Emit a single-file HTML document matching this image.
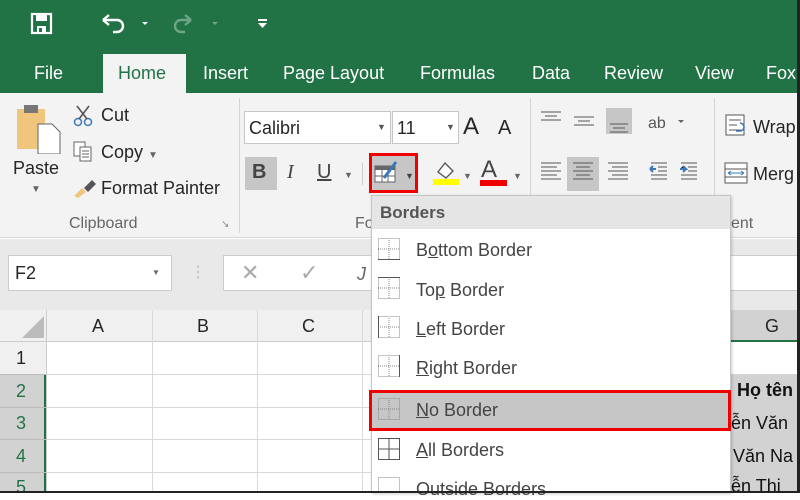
<!DOCTYPE html>
<html><head><style>
*{margin:0;padding:0;box-sizing:border-box}
body{width:800px;height:493px;overflow:hidden;background:#fff;font-family:"Liberation Sans",sans-serif;position:relative;color:#262626}
.a{position:absolute}
.t{position:absolute;white-space:nowrap}
</style></head><body>
<!-- header -->
<div class="a" style="left:0;top:0;width:800px;height:93px;background:#217346"></div>
<svg class="a" style="left:30px;top:12px" width="24" height="24"><rect x="2" y="2" width="19" height="19" fill="none" stroke="#fff" stroke-width="2.2"/><rect x="6" y="3" width="11" height="6" fill="#fff"/><rect x="7" y="14" width="9" height="7" fill="#fff"/><rect x="9" y="16" width="3" height="4" fill="#217346"/></svg>
<svg class="a" style="left:100px;top:14px" width="60" height="20"><path d="M5 6 H17 a6 6 0 0 1 0 12 h-4" fill="none" stroke="#fff" stroke-width="2.4"/><path d="M3 6 L9 1 M3 6 L9 11" stroke="#fff" stroke-width="2.4"/><path d="M42 8 l6 0 l-3 3z" fill="#fff"/></svg>
<svg class="a" style="left:172px;top:14px" width="50" height="20" opacity=".35"><path d="M17 6 H9 a6 6 0 0 0 0 12 h4" fill="none" stroke="#fff" stroke-width="2.4"/><path d="M19 6 L13 1 M19 6 L13 11" stroke="#fff" stroke-width="2.4"/><path d="M40 8 l6 0 l-3 3z" fill="#fff"/></svg>
<svg class="a" style="left:257px;top:18px" width="12" height="12"><rect x="1" y="1" width="9" height="2" fill="#fff"/><path d="M1 5 h9 l-4.5 5z" fill="#fff"/></svg>
<div class="a" style="left:103px;top:54px;width:83px;height:40px;background:#f3f3f3"></div>
<div class="t" style="left:34px;top:63px;font-size:18px;color:#fff">File</div>
<div class="t" style="left:118px;top:63px;font-size:18px;color:#217346">Home</div>
<div class="t" style="left:203px;top:63px;font-size:18px;color:#fff">Insert</div>
<div class="t" style="left:283px;top:63px;font-size:18px;color:#fff">Page Layout</div>
<div class="t" style="left:420px;top:63px;font-size:18px;color:#fff">Formulas</div>
<div class="t" style="left:532px;top:63px;font-size:18px;color:#fff">Data</div>
<div class="t" style="left:604px;top:63px;font-size:18px;color:#fff">Review</div>
<div class="t" style="left:695px;top:63px;font-size:18px;color:#fff">View</div>
<div class="t" style="left:766px;top:63px;font-size:18px;color:#fff">Fox</div>
<!-- ribbon -->
<div class="a" style="left:0;top:93px;width:800px;height:145px;background:#f3f3f3;border-bottom:1px solid #d5d5d5"></div>
<div class="a" style="left:239px;top:98px;width:1px;height:135px;background:#d5d5d5"></div>
<div class="a" style="left:530px;top:98px;width:1px;height:135px;background:#d5d5d5"></div>
<div class="a" style="left:714px;top:98px;width:1px;height:135px;background:#d5d5d5"></div>
<!-- paste -->
<svg class="a" style="left:14px;top:102px" width="50" height="52"><rect x="3" y="7" width="28" height="40" fill="#f0c67d"/><rect x="10" y="3" width="14" height="8" fill="#777"/><path d="M24 22 h14 l8 8 v22 h-22z" fill="#fff" stroke="#666"/></svg>
<div class="t" style="left:13px;top:158px;font-size:18px">Paste</div>
<div class="t" style="left:31px;top:184px;font-size:10px;color:#666">▼</div>
<svg class="a" style="left:72px;top:104px" width="24" height="24"><circle cx="6" cy="18" r="3.5" fill="none" stroke="#3a78b7" stroke-width="1.5"/><circle cx="16" cy="18" r="3.5" fill="none" stroke="#3a78b7" stroke-width="1.5"/><path d="M7 15 L17 2 M15 15 L5 2" stroke="#555" stroke-width="1.6"/></svg>
<div class="t" style="left:101px;top:105px;font-size:18px">Cut</div>
<svg class="a" style="left:72px;top:140px" width="24" height="24"><rect x="2" y="2" width="11" height="14" fill="#fff" stroke="#666"/><rect x="8" y="7" width="11" height="14" fill="#fff" stroke="#666"/><path d="M10 11h7M10 14h7M10 17h7" stroke="#666"/></svg>
<div class="t" style="left:101px;top:142px;font-size:18px">Copy <span style="font-size:10px;color:#666">▼</span></div>
<svg class="a" style="left:72px;top:176px" width="26" height="24"><path d="M2 20 L10 12 L14 16 L6 22z" fill="#f0c67d"/><path d="M12 12 L20 4 L24 8 L16 16z" fill="#555"/></svg>
<div class="t" style="left:101px;top:178px;font-size:18px">Format Painter</div>
<div class="t" style="left:69px;top:215px;font-size:16px;color:#666">Clipboard</div>
<div class="t" style="left:221px;top:219px;font-size:10px;color:#888">↘</div>
<!-- font -->
<div class="a" style="left:244px;top:111px;width:147px;height:33px;background:#fff;border:1px solid #c6c6c6"></div>
<div class="t" style="left:249px;top:118px;font-size:18px">Calibri</div>
<div class="t" style="left:377px;top:122px;font-size:9px;color:#555">▼</div>
<div class="a" style="left:392px;top:111px;width:67px;height:33px;background:#fff;border:1px solid #c6c6c6"></div>
<div class="t" style="left:397px;top:118px;font-size:18px">11</div>
<div class="t" style="left:446px;top:122px;font-size:9px;color:#555">▼</div>
<div class="t" style="left:463px;top:113px;font-size:24px">A</div>
<div class="t" style="left:498px;top:117px;font-size:20px">A</div>
<div class="a" style="left:245px;top:157px;width:32px;height:33px;background:#c6c6c6"></div>
<div class="t" style="left:252px;top:161px;font-size:20px;font-weight:bold;color:#444">B</div>
<div class="t" style="left:287px;top:161px;font-size:20px;font-style:italic;font-family:'Liberation Serif',serif;color:#444">I</div>
<div class="t" style="left:317px;top:161px;font-size:20px;text-decoration:underline;color:#444">U</div>
<div class="t" style="left:344px;top:170px;font-size:9px;color:#666">▼</div>
<div class="a" style="left:362px;top:163px;width:1px;height:22px;background:#ccc"></div>
<div class="a" style="left:369px;top:153px;width:49px;height:40px;background:#c6c6c6;border:3px solid #e00"></div>
<svg class="a" style="left:374px;top:158px" width="28" height="28"><rect x="1" y="8" width="20" height="16" fill="#fff" stroke="#666"/><rect x="1" y="8" width="20" height="4" fill="#666"/><path d="M8 12v12M14 12v12M1 18h20" stroke="#666"/><path d="M10 20 L22 4" stroke="#3a78b7" stroke-width="3"/></svg>
<div class="t" style="left:405px;top:171px;font-size:9px;color:#444">▼</div>
<svg class="a" style="left:432px;top:158px" width="28" height="28"><path d="M6 14 L13 5 L21 13 L14 20z" fill="#fff" stroke="#555" stroke-width="1.4"/><rect x="1" y="21" width="26" height="6" fill="#ffff00"/></svg>
<div class="t" style="left:463px;top:171px;font-size:9px;color:#666">▼</div>
<div class="t" style="left:481px;top:156px;font-size:24px;color:#444">A</div>
<div class="a" style="left:480px;top:180px;width:27px;height:6px;background:#e00"></div>
<div class="t" style="left:513px;top:171px;font-size:9px;color:#666">▼</div>
<div class="t" style="left:355px;top:215px;font-size:16px;color:#666">Fo</div>
<!-- alignment -->
<svg class="a" style="left:538px;top:108px" width="150" height="30"><path d="M3 4h20M7 8h12M3 12h20" stroke="#555"/><path d="M36 9h20M40 13h12M36 17h20" stroke="#555"/><rect x="68" y="0" width="26" height="26" fill="#c6c6c6"/><path d="M72 16h18M75 20h12M72 24h18" stroke="#555"/><text x="110" y="20" font-size="16" fill="#555" font-family="Liberation Sans">ab</text><path d="M140 12 h6 l-3 3z" fill="#666"/></svg>
<svg class="a" style="left:538px;top:157px" width="172" height="34"><path d="M3 6h20M3 10h16M3 14h20M3 18h16M3 22h20" stroke="#555"/><rect x="29" y="0" width="32" height="34" fill="#c6c6c6"/><path d="M35 6h20M38 10h14M35 14h20M38 18h14M35 22h20" stroke="#555"/><path d="M70 6h20M74 10h16M70 14h20M74 18h16M70 22h20" stroke="#555"/><path d="M113 6h16M120 10h9M120 14h9M113 18h16M113 22h16" stroke="#555"/><path d="M118 12 l-6 0 M112 12 l3-3 M112 12 l3 3" stroke="#3a78b7" stroke-width="2"/><path d="M143 6h16M150 10h9M150 14h9M143 18h16M143 22h16" stroke="#555"/><path d="M142 12 l6 0 l-3-3 M148 12 l-3 3" stroke="#3a78b7" stroke-width="2"/></svg>
<svg class="a" style="left:724px;top:113px" width="26" height="26"><rect x="2" y="2" width="18" height="20" fill="#fff" stroke="#555"/><path d="M5 7h12M5 12h8M5 17h12" stroke="#555"/><path d="M16 10 a4 4 0 0 1 0 8h-4" stroke="#3a78b7" fill="none" stroke-width="1.6"/></svg>
<div class="t" style="left:753px;top:117px;font-size:18px">Wrap</div>
<svg class="a" style="left:724px;top:161px" width="26" height="26"><rect x="1" y="2" width="22" height="20" fill="#fff" stroke="#555"/><path d="M1 8h22M1 16h22" stroke="#555"/><path d="M4 12h16M4 12l3-2M4 12l3 2M20 12l-3-2M20 12l-3 2" stroke="#3a78b7"/></svg>
<div class="t" style="left:753px;top:164px;font-size:18px">Merg</div>
<div class="t" style="left:731px;top:215px;font-size:16px;color:#666">ent</div>
<!-- formula bar -->
<div class="a" style="left:0;top:239px;width:800px;height:71px;background:#e9e9e9"></div>
<div class="a" style="left:8px;top:255px;width:164px;height:36px;background:#fff;border:1px solid #ccc"></div>
<div class="t" style="left:15px;top:263px;font-size:18px">F2</div>
<div class="t" style="left:152px;top:268px;font-size:8px;color:#666">▼</div>
<div class="t" style="left:190px;top:262px;font-size:16px;color:#bbb">⋮</div>
<div class="a" style="left:223px;top:255px;width:577px;height:36px;background:#fff;border:1px solid #ccc"></div>
<div class="t" style="left:241px;top:260px;font-size:22px;color:#aaa">✕</div>
<div class="t" style="left:300px;top:260px;font-size:22px;color:#aaa">✓</div>
<div class="t" style="left:236px;top:264px;font-size:18px;color:#666;left:357px;font-style:italic">J</div>
<!-- grid -->
<div class="a" style="left:0;top:310px;width:800px;height:32px;background:#f0f0f0;border-bottom:1px solid #ccc"></div>
<svg class="a" style="left:20px;top:314px" width="26" height="26"><path d="M24 2 V24 H2z" fill="#bcbcbc"/></svg>
<div class="a" style="left:46px;top:310px;width:1px;height:183px;background:#ccc"></div>
<div class="a" style="left:152px;top:310px;width:1px;height:183px;background:#d9d9d9"></div>
<div class="a" style="left:257px;top:310px;width:1px;height:183px;background:#d9d9d9"></div>
<div class="a" style="left:362px;top:310px;width:1px;height:183px;background:#d9d9d9"></div>
<div class="t" style="left:92px;top:316px;font-size:18px">A</div>
<div class="t" style="left:197px;top:316px;font-size:18px">B</div>
<div class="t" style="left:302px;top:316px;font-size:18px">C</div>
<div class="a" style="left:731px;top:310px;width:69px;height:32px;background:#d2d2d2;border-bottom:2px solid #217346"></div>
<div class="t" style="left:765px;top:316px;font-size:18px">G</div>
<div class="a" style="left:0;top:342px;width:46px;height:151px;background:#f0f0f0"></div>
<div class="a" style="left:0;top:374px;width:46px;height:119px;background:#d2d2d2;border-right:2px solid #217346"></div>
<div class="a" style="left:47px;top:374px;width:753px;height:1px;background:#d9d9d9"></div>
<div class="a" style="left:47px;top:407px;width:753px;height:1px;background:#d9d9d9"></div>
<div class="a" style="left:47px;top:439px;width:753px;height:1px;background:#d9d9d9"></div>
<div class="a" style="left:47px;top:472px;width:753px;height:1px;background:#d9d9d9"></div>
<div class="a" style="left:0;top:374px;width:46px;height:1px;background:#bbb"></div>
<div class="a" style="left:0;top:407px;width:46px;height:1px;background:#bbb"></div>
<div class="a" style="left:0;top:439px;width:46px;height:1px;background:#bbb"></div>
<div class="a" style="left:0;top:472px;width:46px;height:1px;background:#bbb"></div>
<div class="t" style="left:16px;top:348px;font-size:18px">1</div>
<div class="t" style="left:16px;top:381px;font-size:18px;color:#217346">2</div>
<div class="t" style="left:16px;top:413px;font-size:18px;color:#217346">3</div>
<div class="t" style="left:16px;top:446px;font-size:18px;color:#217346">4</div>
<div class="t" style="left:16px;top:477px;font-size:18px;color:#217346">5</div>
<div class="a" style="left:731px;top:374px;width:69px;height:119px;background:#d2d2d2"></div>
<div class="t" style="left:737px;top:380px;font-size:18px;font-weight:bold;color:#111">Họ tên</div>
<div class="t" style="left:731px;top:413px;font-size:18px;color:#111">ễn Văn</div>
<div class="t" style="left:733px;top:446px;font-size:18px;color:#111">Văn Na</div>
<div class="t" style="left:731px;top:476px;font-size:18px;color:#111">ễn Thi</div>
<!-- dropdown -->
<div class="a" style="left:371px;top:195px;width:360px;height:298px;background:#fff;border:1px solid #c6c6c6;box-shadow:1px 1px 3px rgba(0,0,0,.2)"></div>
<div class="a" style="left:372px;top:196px;width:358px;height:33px;background:#e5e5e5"></div>
<div class="t" style="left:380px;top:203px;font-size:17px;font-weight:bold;color:#555">Borders</div>
<div class="a" style="left:369px;top:390px;width:362px;height:41px;background:#c6c6c6;border:3px solid #e00"></div>
<svg class="a" style="left:377px;top:237px" width="26" height="256">
<g fill="none" stroke="#888" stroke-dasharray="1 1">
<rect x="1.5" y="1.5" width="21" height="21"/><path d="M12 1v22M1 12h22"/>
<rect x="1.5" y="40.5" width="21" height="21"/><path d="M12 40v22M1 51h22"/>
<rect x="1.5" y="79.5" width="21" height="21"/><path d="M12 79v22M1 90h22"/>
<rect x="1.5" y="118.5" width="21" height="21"/><path d="M12 118v22M1 129h22"/>
<rect x="1.5" y="161.5" width="21" height="21"/><path d="M12 161v22M1 172h22"/>
<rect x="1.5" y="240.5" width="21" height="21"/></g>
<g fill="none" stroke="#555"><path d="M1 22.5h22"/><path d="M1 40.5h22"/><path d="M1.5 79v22"/><path d="M22.5 118v22"/>
<rect x="1.5" y="201.5" width="21" height="21"/><path d="M12 201v22M1 212h22"/></g>
</svg>
<div class="t" style="left:416px;top:240px;font-size:18px;color:#444">B<u>o</u>ttom Border</div>
<div class="t" style="left:416px;top:280px;font-size:18px;color:#444">To<u>p</u> Border</div>
<div class="t" style="left:416px;top:319px;font-size:18px;color:#444"><u>L</u>eft Border</div>
<div class="t" style="left:416px;top:358px;font-size:18px;color:#444"><u>R</u>ight Border</div>
<div class="t" style="left:416px;top:400px;font-size:18px;color:#444"><u>N</u>o Border</div>
<div class="t" style="left:416px;top:440px;font-size:18px;color:#444"><u>A</u>ll Borders</div>
<div class="t" style="left:416px;top:479px;font-size:18px;color:#444">Outside Borders</div>
<div class="a" style="left:0;top:0;width:800px;height:493px;border-right:3px solid #222;border-bottom:2px solid #222"></div>
</body></html>
